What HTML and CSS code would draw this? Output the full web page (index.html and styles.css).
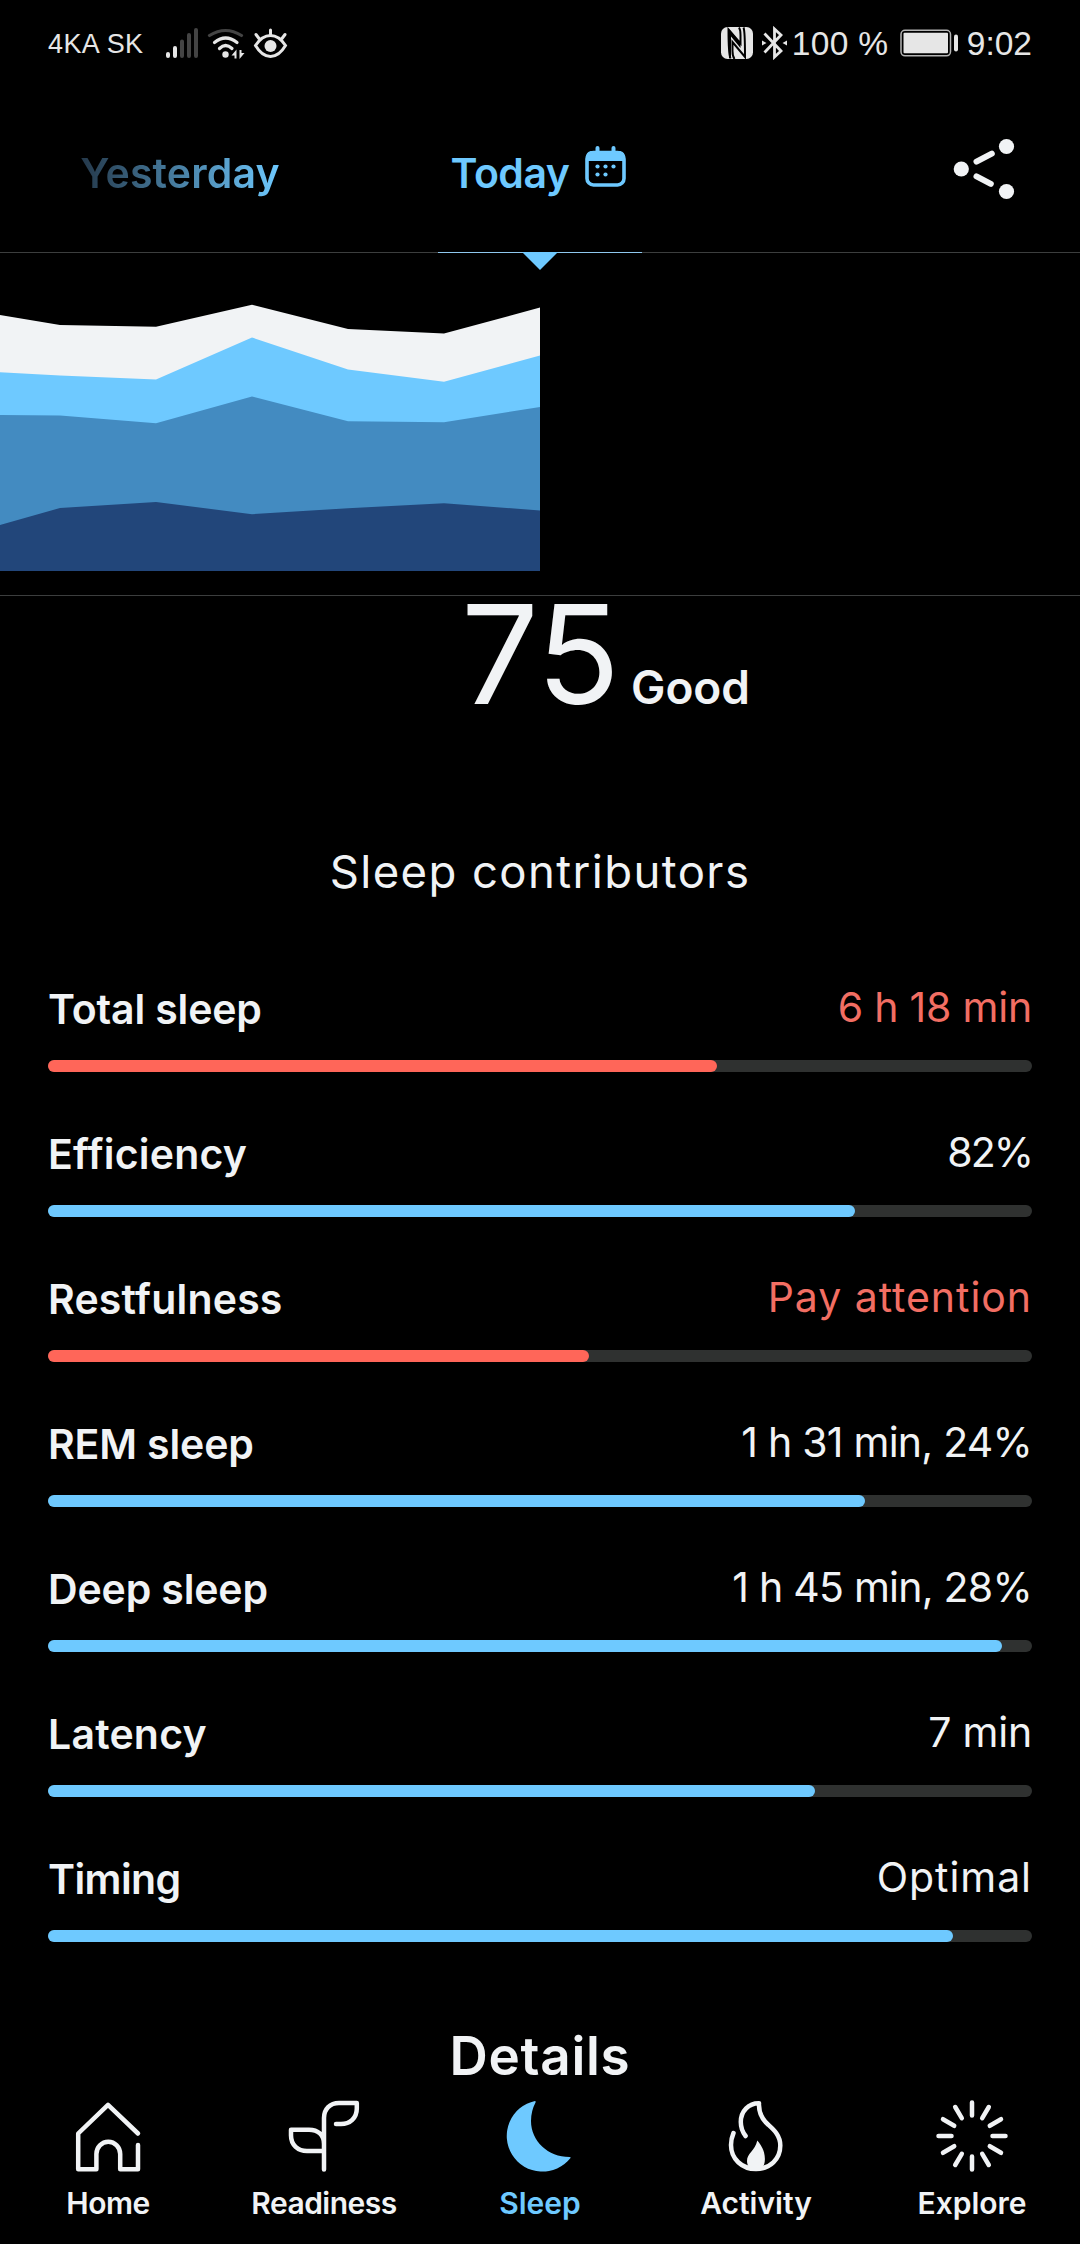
FILE: index.html
```html
<!DOCTYPE html>
<html lang="en">
<head>
<meta charset="utf-8">
<title>Sleep</title>
<link rel="stylesheet" href="styles.css">
</head>
<body>
<div class="screen">
  <div class="status">
    <span class="carrier">4KA SK</span>
    <svg class="status-left" width="124" height="34" viewBox="164 25 124 34" fill="none" stroke-linecap="round">
      <g stroke-width="4">
        <path stroke="#e6e6e6" d="M168 53v2M175 47v8"/>
        <path stroke="#444" d="M182 40.500v14.500M189 34v21M196 29v26"/>
      </g>
      <path stroke="#444" stroke-width="3.200" d="M209.500 34.500Q225.500 24.500 241.500 34.500"/>
      <path stroke="#e6e6e6" stroke-width="3.200" d="M214.500 41.500Q225.500 32.500 237 41.500M219.500 47.500Q225.500 41.500 232 47.500"/>
      <circle cx="225.500" cy="53.500" r="3.200" fill="#e6e6e6"/>
      <path fill="#e6e6e6" d="M231.500 54.500l5-6v9h-2v-3zM244.500 52l-5 6v-9h2v3z"/>
      <path stroke="#e6e6e6" stroke-width="3" d="M255.500 44.500Q262 34.500 270.500 34.500T285.500 44.500Q279 55.500 270.500 55.500T255.500 44.500zM270.500 29v4M256 33.500l3 4M285 33.500l-3 4"/>
      <circle cx="270.500" cy="45" r="6" fill="#e6e6e6"/>
    </svg>
    <svg class="status-right" width="68" height="34" viewBox="720 25 68 34">
      <rect x="721" y="26" width="32" height="32" rx="6.500" fill="#e6e6e6"/>
      <path fill="none" stroke="#000" stroke-width="2" d="M730.500 57.500C728.500 52 728.500 38 728.500 28.500L740.500 42.500V34C740.500 30 740 28 739 26.500M743.500 26.500C745 30 745 46 745 56L732.500 41V50C732.500 54 733 56 734.500 58"/>
      <path fill="#000" d="M728.500 27.500L740.500 42V47L731 35.500V57H729z"/>
      <path fill="none" stroke="#e6e6e6" stroke-width="2.800" d="M764.500 32.500l16.500 17.500-6.500 6v-28l6.500 6-16.500 17.500"/>
      <path fill="#e6e6e6" d="M762 39.500l4.500 2.500-4.500 2.500zM787 39.500l-4.500 2.500 4.500 2.500z"/>
    </svg>
    <span class="level">100 %</span>
    <svg class="battery" width="59" height="28" viewBox="900 28.500 59 28">
      <rect x="901" y="29.800" width="49.500" height="25.500" rx="4" fill="none" stroke="#b4b4b4" stroke-width="1.500"/>
      <rect x="903.500" y="32.300" width="44.500" height="20.500" rx="1" fill="#e6e6e6"/>
      <rect x="954" y="34" width="4" height="17" rx="2" fill="#e6e6e6"/>
    </svg>
    <span class="clock">9:02</span>
  </div>

  <header class="days">
    <div class="day"><span class="day-prev">Yesterday</span></div>
    <div class="day day-current">
      <span class="day-name">Today</span>
      <svg class="calendar" width="41" height="41" viewBox="0 0 41 41">
        <rect x="2" y="6.500" width="37" height="32.500" rx="6.500" fill="none" stroke="#6ec9ff" stroke-width="3.600"/>
        <path fill="#6ec9ff" d="M1 15v-4c0-4 3-6 6-6h27c3 0 6 2 6 6v4z"/>
        <path stroke="#6ec9ff" stroke-width="4" stroke-linecap="round" d="M12.500 2v5M28.500 2v5"/>
        <g fill="#6ec9ff"><circle cx="12.500" cy="20.500" r="2.100"/><circle cx="20.500" cy="20.500" r="2.100"/><circle cx="28.500" cy="20.500" r="2.100"/><circle cx="12.500" cy="28.500" r="2.100"/><circle cx="20.500" cy="28.500" r="2.100"/></g>
      </svg>
      <i class="marker"></i>
    </div>
    <div class="day day-share">
      <svg width="62" height="62" viewBox="953 138 62 62" fill="#f1f3f5">
        <circle cx="961.300" cy="169" r="7.600"/><circle cx="1006.500" cy="146.500" r="7.600"/><circle cx="1006.500" cy="191.500" r="7.600"/>
        <path stroke="#f1f3f5" stroke-width="6" stroke-linecap="round" d="M976.500 161.600l15.300-7.900M976.500 176.400l14.300 7.400"/>
      </svg>
    </div>
  </header>

  <section class="chart">
    <svg width="540" height="318" viewBox="0 253 540 318">
      <path fill="#f1f3f5" d="M0 315L60 325 156 326.700 252 304.700 348 329 444 333.500 540 307.500V571H0z"/>
      <path fill="#6ec9ff" d="M0 372.300L60 375.500 156 379.500 252 337.500 348 369.500 444 381.700 540 355.500V571H0z"/>
      <path fill="#438bc1" d="M0 415L60 415.500 156 423.300 252 396.500 348 421.300 444 422.200 540 407V571H0z"/>
      <path fill="#22467a" d="M0 525L60 508 156 502 252 514.200 348 508.300 444 503.300 540 510.500V571H0z"/>
    </svg>
  </section>

  <main>
    <div class="score">
      <span class="score-value">75</span>
      <span class="score-label">Good</span>
    </div>
    <h2 class="heading">Sleep contributors</h2>
    <ul class="list">
      <li class="item alert"><div class="texts"><span class="label">Total sleep</span><span class="value">6 h 18 min</span></div><div class="track"><div class="fill" style="width:669px"></div></div></li>
      <li class="item"><div class="texts"><span class="label loose">Efficiency</span><span class="value percent">82%</span></div><div class="track"><div class="fill" style="width:807px"></div></div></li>
      <li class="item alert"><div class="texts"><span class="label loose">Restfulness</span><span class="value words">Pay attention</span></div><div class="track"><div class="fill" style="width:541px"></div></div></li>
      <li class="item"><div class="texts"><span class="label">REM sleep</span><span class="value duration">1 h 31 min, 24%</span></div><div class="track"><div class="fill" style="width:817px"></div></div></li>
      <li class="item"><div class="texts"><span class="label">Deep sleep</span><span class="value duration">1 h 45 min, 28%</span></div><div class="track"><div class="fill" style="width:954px"></div></div></li>
      <li class="item"><div class="texts"><span class="label loose">Latency</span><span class="value">7 min</span></div><div class="track"><div class="fill" style="width:767px"></div></div></li>
      <li class="item"><div class="texts"><span class="label timing">Timing</span><span class="value words">Optimal</span></div><div class="track"><div class="fill" style="width:905px"></div></div></li>
    </ul>
    <h2 class="details">Details</h2>
  </main>

  <nav class="nav">
    <a class="tab">
      <svg class="icon" viewBox="0 0 76 72"><path d="M68 33.500L38 4.800 8.200 33.500V69.300H26.400V54a11.900 12.200 0 0 1 23.800 0V69.300H68V45"/></svg>
      <span class="tight">Home</span>
    </a>
    <a class="tab">
      <svg class="icon" viewBox="0 0 76 72"><path d="M38 69.500V18C38 9 44 3 53 3H70.800V8.500C70.800 18 64 24 55 24H50M38 44C38 35 32 29.700 23 29.700H5V35.500C5 45 12 51 21 51H38"/></svg>
      <span class="tight">Readiness</span>
    </a>
    <a class="tab tab-on">
      <svg class="icon" viewBox="0 0 76 72"><path class="solid" d="M33 1A35.700 35.700 0 1 0 68.500 58Q69 57 67.500 57C46 57 29 41 29 21Q29 11 33.500 2.500Q34 1 33 1z"/></svg>
      <span>Sleep</span>
    </a>
    <a class="tab">
      <svg class="icon" viewBox="0 0 76 72"><path d="M15.500 33C13.800 37 13 41 13 45C13 59 24 69 38 69C52 69 62.300 59 62.300 45.500C62.300 35 55 29 50 24.500C44 19 40.500 12 41 3.200C31 3 22.800 11 22.800 22C22.800 28 24.500 32 27.600 36"/><path class="solid" d="M39.300 40.500C42 43.500 46.900 50 46.900 59C46.900 66 44 70 38 70C32 70 29 66 29 61C29 53 37 51 39.300 40.500z"/></svg>
      <span>Activity</span>
    </a>
    <a class="tab">
      <svg class="icon" viewBox="0 0 76 72"><path d="M38 2.500V15.500M38 56.500V69.500M4.500 36H17.500M58.500 36H71.500M54.800 7L48.200 18.200M21.200 7L27.800 18.200M54.800 65L48.200 53.800M21.200 65L27.800 53.800M67 19.200L55.800 25.800M9 19.200L20.200 25.800M67 52.800L55.800 46.200M9 52.800L20.200 46.200"/></svg>
      <span>Explore</span>
    </a>
  </nav>
</div>
</body>
</html>
```
FILE: styles.css
```css
* { box-sizing: border-box; }
body { margin: 0; background: #000; color: #f1f3f5; font-family: Inter, "Liberation Sans", sans-serif; }
h2, ul { margin: 0; padding: 0; list-style: none; }
svg { display: block; flex: none; }
.screen { width: 1080px; height: 2244px; display: flex; flex-direction: column; overflow: hidden; }
.screen > * { flex: none; }

.status { height: 86px; padding: 1px 48px 0; display: flex; align-items: center; color: #e6e6e6; font-family: "Liberation Sans", sans-serif; font-size: 33.5px; white-space: nowrap; }
.carrier { padding-top: 1px; font-size: 27px; width: 116px; letter-spacing: 0.4px; }
.status-left, .status-right, .battery { margin-top: -1px; }
.status-right { margin-left: auto; }
.level { margin-left: 4px; width: 108px; letter-spacing: 0.3px; }
.battery { margin-right: 8px; }

.days { height: 167px; border-bottom: 1px solid #3c3e3e; display: grid; grid-template-columns: repeat(3, 360px); }
.day { display: flex; align-items: center; justify-content: center; padding-top: 7px; font-size: 41px; font-weight: 600; line-height: 50px; }
.day-prev { letter-spacing: 0.15px; background: linear-gradient(90deg, #24384a, #6ec9ff); background-clip: text; -webkit-background-clip: text; color: transparent; }
.day-current { position: relative; gap: 16px; padding-right: 3px; color: #6ec9ff; }
.day-name { letter-spacing: -0.5px; }
.calendar { margin-bottom: 12px; }
.marker { position: absolute; left: 78px; bottom: -1px; width: 204px; height: 1px; background: #8fc8ee; }
.marker::after { content: ""; position: absolute; left: 84px; top: 0; border: 18px solid transparent; border-top-color: #6ec9ff; border-bottom: 0; }
.day-share { justify-content: flex-end; padding: 0 65px 0 0; }

.chart { height: 343px; border-bottom: 1px solid #3c3e3e; }

.score { height: 116px; display: grid; grid-template-columns: 1fr auto 1fr; align-items: baseline; }
.score-value { grid-column: 2; font-size: 137.5px; line-height: 116px; letter-spacing: -1px; }
.score-label { padding-left: 12px; font-size: 46px; font-weight: 600; line-height: 50px; letter-spacing: -0.1px; }
.heading { margin-top: 136px; text-align: center; font-size: 45.5px; font-weight: 400; line-height: 48px; letter-spacing: 1.4px; }

.list { margin-top: 92px; padding: 0 48px; }
.item { height: 145px; }
.texts { height: 72px; display: flex; justify-content: space-between; align-items: flex-start; }
.label { padding-top: 1px; font-size: 41px; font-weight: 600; line-height: 40px; letter-spacing: -0.15px; }
.label.loose { letter-spacing: 0.2px; }
.label.timing { letter-spacing: -0.6px; }
.value { padding-top: 1px; font-size: 41px; line-height: 36px; letter-spacing: -0.2px; }
.value.percent { letter-spacing: -2px; }
.value.words { letter-spacing: 0.95px; }
.value.duration { letter-spacing: -0.75px; }
.alert .value { color: #f26e63; }
.track { height: 12px; border-radius: 6px; background: #2f3130; }
.fill { height: 12px; border-radius: 6px; background: #6ec9ff; }
.alert .fill { background: #ff6659; }
.details { margin-top: 25px; text-align: center; font-size: 53px; font-weight: 600; line-height: 57px; letter-spacing: 0.7px; }

.nav { display: grid; grid-template-columns: repeat(5, 1fr); height: 159px; padding-top: 15px; }
.tab { display: flex; flex-direction: column; align-items: center; gap: 16px; font-size: 30px; font-weight: 600; line-height: 30px; }
.tab-on { color: #6ec9ff; }
.tight { letter-spacing: -0.5px; }
.icon { width: 76px; height: 72px; fill: none; stroke: currentColor; stroke-width: 4.5; stroke-linecap: round; stroke-linejoin: round; }
.solid { fill: currentColor; stroke: none; }
```
